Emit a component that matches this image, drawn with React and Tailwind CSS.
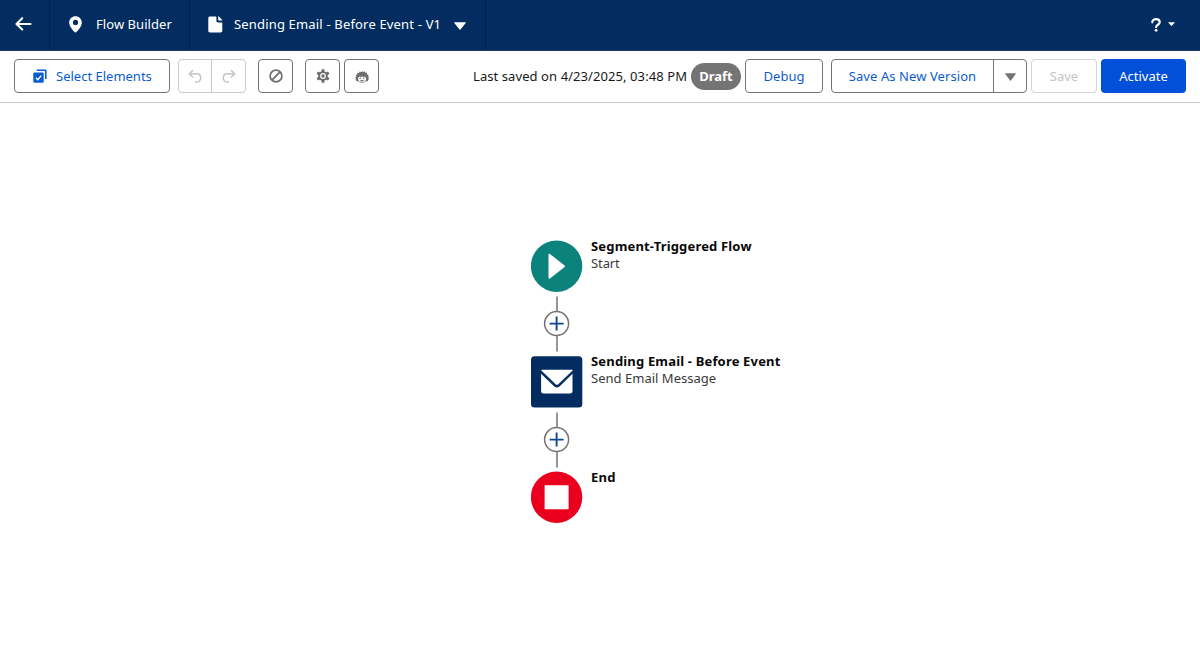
import React from 'react';

const BackIcon = () => (
  <svg className="w-[17px] h-[14px]" viewBox="0 0 17 14" fill="none" stroke="#fff" strokeWidth="2.1" strokeLinecap="round" strokeLinejoin="round">
    <path d="M15.5 7H1.6M7.2 1.3L1.5 7l5.7 5.6" />
  </svg>
);

const PinIcon = () => (
  <svg className="w-[13px] h-[17px]" viewBox="0 0 13 17" fill="#fff">
    <path fillRule="evenodd" d="M6.5.3C3 .3.2 3 .2 6.4c0 3.9 3.9 8.2 5.7 9.8.4.3.8.3 1.2 0 1.8-1.6 5.7-5.9 5.7-9.8C12.8 3 10 .3 6.5.3zm0 8.7a2.6 2.6 0 1 1 0-5.2 2.6 2.6 0 0 1 0 5.2z" />
  </svg>
);

const FileIcon = () => (
  <svg className="w-[15px] h-[17px]" viewBox="0 0 15 17" fill="#fff">
    <path d="M2 .4h5.8c.4 0 .6.2.6.6v4c0 .8.6 1.4 1.4 1.4h3.9c.4 0 .6.2.6.6v7.7c0 1-.7 1.7-1.7 1.7H2C1 16.4.3 15.7.3 14.7V2.1C.3 1.1 1 .4 2 .4z" />
    <path d="M10.2.6v3.2c0 .5.3.8.8.8h3c.4 0 .5-.4.2-.7L10.900.4c-.3-.3-.7-.2-.7.2z" />
  </svg>
);

const SelectIcon = () => (
  <svg className="w-[14px] h-[14px]" viewBox="0 0 14 14">
    <path d="M3.800 1.200h8.400c.4 0 .6.2.6.6v8.200" fill="none" stroke="#0b5cd0" strokeWidth="1.600" />
    <rect x=".3" y="3.400" width="10.400" height="10.400" rx="1.200" fill="#0b5cd0" />
    <path d="M2.900 8.800l1.900 1.900 3.400-4.100" fill="none" stroke="#fff" strokeWidth="1.400" />
  </svg>
);

const UndoIcon = ({ className = '' }) => (
  <svg className={`w-[14px] h-[14px] ${className}`} viewBox="0 0 14 14" fill="none" stroke="#c4c4c4" strokeWidth="1.6" strokeLinecap="round" strokeLinejoin="round">
    <path d="M4.600 1.500L1.400 4.800l3.200 3.200M1.600 4.800h6.900c2.500 0 4.200 1.700 4.200 4s-1.700 4.200-3.900 4.200H7.400" />
  </svg>
);

const BanIcon = () => (
  <svg className="w-[14px] h-[14px]" viewBox="0 0 14 14" fill="none" stroke="#6e6e6e" strokeWidth="1.7">
    <circle cx="7" cy="7" r="5.900" />
    <path d="M2.900 11.100l8.200-8.200" />
  </svg>
);

const GearIcon = () => (
  <svg className="w-[14px] h-[14px]" viewBox="0 0 14 14">
    <g fill="#6e6e6e">
      <rect x="5.500" y=".3" width="3" height="13.400" rx=".7" />
      <rect x="5.500" y=".3" width="3" height="13.400" rx=".7" transform="rotate(60 7 7)" />
      <rect x="5.500" y=".3" width="3" height="13.400" rx=".7" transform="rotate(120 7 7)" />
      <circle cx="7" cy="7" r="4.800" />
    </g>
    <circle cx="7" cy="7" r="2.900" fill="#fff" />
    <circle cx="7" cy="7" r="1.700" fill="#6e6e6e" />
  </svg>
);

const EinsteinIcon = () => (
  <svg className="w-[14px] h-[13px]" viewBox="0 0 14 13">
    <path fill="#6e6e6e" d="M1.800 11.300L.5 9.700l.7-.9-1-1.300 1.100-.9-.5-1.700 1.500-.3.100-1.800 1.600.2.600-1.600 1.500.8L7.200.9l1 1.300 1.500-.9.600 1.500 1.600-.2.100 1.800 1.500.4-.4 1.600 1 1-.9 1.300.6.900-1.300 1.700-1.500.2V7.800L9.800 6.600 8.700 7.500 7 6.300l-1.600 1L4.300 6.600 3.200 7.900v3.600z" />
    <path fill="none" stroke="#6e6e6e" strokeWidth=".8" d="M3.400 10.300c.5 1.400 1.900 2 3.600 2s3.100-.6 3.600-2" />
    <g fill="#6e6e6e">
      <circle cx="5.200" cy="8.500" r=".65" />
      <circle cx="8.800" cy="8.500" r=".65" />
      <path d="M4.900 10.700c.6-.9 1.500-1 2.100-.5.6-.5 1.500-.4 2.100.5-1 .6-3.200.6-4.200 0z" />
    </g>
  </svg>
);

const HelpIcon = () => (
  <svg className="w-[10px] h-[14px]" viewBox="0 0 10 14" fill="none" stroke="#fff" strokeWidth="2.2">
    <path d="M1.300 4.300C1.300 2.300 2.800 1.200 5 1.200s3.700 1.200 3.700 3c0 2.500-3.600 2.600-3.600 5" strokeLinecap="round" />
    <circle cx="5.100" cy="12.300" r="1.400" fill="#fff" stroke="none" />
  </svg>
);

const Caret = ({ className }) => (
  <svg className={className} viewBox="0 0 12 8" preserveAspectRatio="none" fill="currentColor">
    <path d="M.7.300h10.600c.5 0 .7.400.4.800L6.500 7.500c-.3.400-.7.400-1 0L.3 1.100C0 .700.200.300.7.300z" />
  </svg>
);

const PlayNode = () => (
  <svg className="w-[52px] h-[52px]" viewBox="0 0 52 52">
    <circle cx="25.6" cy="26.2" r="25.7" fill="#0b827c" />
    <path d="M17.500 14.800c0-.9.8-1.300 1.500-.8l14.600 11.400c.5.400.5 1.100 0 1.500L19 38.500c-.7.500-1.500.1-1.500-.8z" fill="#fff" />
  </svg>
);

const EmailNode = () => (
  <svg className="w-[52px] h-[52px]" viewBox="0 0 52 52">
    <rect x="0" y=".3" width="51.300" height="51.300" rx="3.600" fill="#032d60" />
    <path d="M11 13.800h30c.6 0 .8.500.4.900L27 28.400c-.6.600-1.500.600-2.100 0L10.600 14.700c-.4-.4-.2-.9.400-.9z" fill="#fff" />
    <path d="M10.100 17.800l13.200 12.700c1.500 1.400 3.700 1.400 5.200 0l13-12.700v17.400c0 1.300-.9 2.200-2.200 2.200h-27c-1.300 0-2.200-.9-2.200-2.200z" fill="#fff" />
  </svg>
);

const EndNode = () => (
  <svg className="w-[52px] h-[52px]" viewBox="0 0 52 52">
    <circle cx="25.6" cy="26.2" r="25.700" fill="#ea001e" />
    <rect x="13.600" y="14.200" width="24" height="24" rx=".6" fill="#fff" />
  </svg>
);

const Connector = () => (
  <svg className="w-[52px] h-[56px] my-1" viewBox="0 0 52 56" fill="none">
    <path d="M26 0.500v55" stroke="#919191" strokeWidth="1.900" />
    <circle cx="25.600" cy="27.600" r="12" fill="#fff" stroke="#747474" strokeWidth="1.500" />
    <path d="M25.600 20.600v14M18.600 27.600h14" stroke="#0b4a8f" strokeWidth="1.900" />
  </svg>
);

const steps = [
  { title: 'Segment-Triggered Flow', sub: 'Start', Icon: PlayNode, titleClass: 'tracking-[0.17px]', subClass: 'tracking-[-0.1px]' },
  { title: 'Sending Email - Before Event', sub: 'Send Email Message', Icon: EmailNode, titleClass: 'tracking-[0.17px]', subClass: 'tracking-[0.02px]' },
  { title: 'End', sub: '', Icon: EndNode, titleClass: 'tracking-[0.2px]', subClass: '' },
];

const Header = () => (
  <header className="h-[51px] bg-[#032d60] border-b border-[#1c3a70] flex text-white text-[13px]">
    <div className="w-[50px] border-r border-[#02214c] flex items-center pl-[15px] pb-[3px]">
      <BackIcon />
    </div>
    <div className="w-[140px] border-r border-[#02214c] flex items-center pl-[19px] pb-[2px]">
      <PinIcon />
      <span className="ml-[14px] pt-[2px] tracking-[0.06px]">Flow Builder</span>
    </div>
    <div className="w-[296px] border-r border-[#02214c] flex items-center pl-[18px] pb-[2px]">
      <FileIcon />
      <span className="ml-[11px] pt-[2px] w-[208px] tracking-[0.17px]">Sending Email - Before Event - V1</span>
      <Caret className="w-[12px] h-[8px] ml-[12px] mt-[3px]" />
    </div>
    <div className="ml-auto flex items-center pr-[25px]">
      <HelpIcon />
      <Caret className="w-[7px] h-[4px] ml-[7px] mb-[2px]" />
    </div>
  </header>
);

const Toolbar = () => (
  <div className="h-[52px] border-b border-[#c9c9c9] bg-white flex items-start pt-[8px] pl-[14px] text-[13px] text-[#0b5cd0]">
    <button className="w-[156px] h-[34px] border border-[#747474] rounded-[4px] flex items-center pl-[18px]">
      <SelectIcon />
      <span className="ml-[9px] pt-[2px]">Select Elements</span>
    </button>
    <div className="ml-[8px] w-[68px] h-[34px] border border-[#c9c9c9] rounded-[4px] flex">
      <div className="w-[33px] border-r border-[#c9c9c9] flex items-center justify-center"><UndoIcon /></div>
      <div className="flex-1 flex items-center justify-center"><UndoIcon className="-scale-x-100" /></div>
    </div>
    <button className="ml-[12px] w-[35px] h-[34px] border border-[#747474] rounded-[4px] flex items-center justify-center"><BanIcon /></button>
    <button className="ml-[12px] w-[35px] h-[34px] border border-[#747474] rounded-[4px] flex items-center justify-center"><GearIcon /></button>
    <button className="ml-[4px] w-[35px] h-[34px] border border-[#747474] rounded-[4px] flex items-center justify-center"><EinsteinIcon /></button>

    <div className="ml-auto pr-[14px] flex items-center">
      <span className="w-[218px] pt-[2px] text-[#181818] tracking-[0.08px]">Last saved on 4/23/2025, 03:48 PM</span>
      <span className="w-[50px] h-[27px] pt-[2px] rounded-full bg-[#747474] text-white font-bold flex items-center justify-center">Draft</span>
      <button className="ml-[4px] w-[78px] h-[34px] pt-[2px] border border-[#747474] rounded-[4px]">Debug</button>
      <div className="ml-[8px] w-[196px] h-[34px] border border-[#747474] rounded-[4px] flex">
        <button className="w-[162px] pt-[2px] border-r border-[#747474] tracking-[0.08px]">Save As New Version</button>
        <button className="flex-1 flex items-center justify-center text-[#747474]"><Caret className="w-[11px] h-[8px] mt-[2px]" /></button>
      </div>
      <button className="ml-[4px] w-[66px] h-[34px] pt-[2px] border border-[#d4d4d4] rounded-[4px] text-[#c4c4c4]">Save</button>
      <button className="ml-[4px] w-[85px] h-[34px] pt-[2px] rounded-[4px] bg-[#0250d9] text-white">Activate</button>
    </div>
  </div>
);

const App = () => {
  return (
    <div className="w-full h-[671px] bg-white overflow-hidden whitespace-nowrap font-['Noto_Sans','Open_Sans',sans-serif]">
      <Header />
      <Toolbar />
      <main className="pt-[137px] pl-[531px] text-[13px] leading-[17px]">
        {steps.map(({ title, sub, Icon, titleClass, subClass }, i) => (
          <div key={title} className={i < 2 ? 'h-[115.6px]' : ''}>
            <div className="flex h-[52px]">
              <Icon />
              <div className="ml-[8px] -mt-[2.4px]">
                <div className={`font-bold text-[#080808] ${titleClass}`}>{title}</div>
                <div className={`text-[#3a3a3a] ${subClass}`}>{sub}</div>
              </div>
            </div>
            {i < 2 && <Connector />}
          </div>
        ))}
      </main>
    </div>
  );
};

export default App;
